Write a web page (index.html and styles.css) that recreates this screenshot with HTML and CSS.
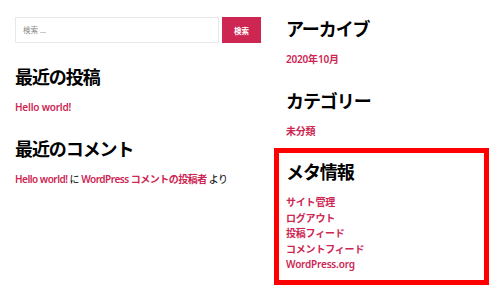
FILE: index.html
```html
<!DOCTYPE html>
<html lang="ja">
<head>
<meta charset="utf-8">
<title>Widgets</title>
<link rel="stylesheet" href="styles.css">
</head>
<body>
<div class="page">
  <div class="col">
    <form class="search">
      <input class="search-field" type="search" placeholder="検索 …">
      <button class="search-btn" type="button">検索</button>
    </form>
    <section class="widget">
      <h2 class="widget-title">最近の投稿</h2>
      <ul class="links"><li><a href="#">Hello world!</a></li></ul>
    </section>
    <section class="widget">
      <h2 class="widget-title">最近のコメント</h2>
      <ul class="links comments"><li><a href="#">Hello world!</a> に <a href="#">WordPress コメントの投稿者</a> より</li></ul>
    </section>
  </div>
  <div class="col right">
    <section class="widget first">
      <h2 class="widget-title">アーカイブ</h2>
      <ul class="links"><li><a href="#">2020年10月</a></li></ul>
    </section>
    <section class="widget">
      <h2 class="widget-title">カテゴリー</h2>
      <ul class="links"><li><a href="#">未分類</a></li></ul>
    </section>
    <section class="widget meta">
      <h2 class="widget-title">メタ情報</h2>
      <ul class="links">
        <li><a href="#">サイト管理</a></li>
        <li><a href="#">ログアウト</a></li>
        <li><a href="#">投稿フィード</a></li>
        <li><a href="#">コメントフィード</a></li>
        <li><a href="#">WordPress.org</a></li>
      </ul>
    </section>
  </div>
</div>
</body>
</html>
```
FILE: styles.css
```css
html, body {
  margin: 0;
  padding: 0;
  background: #fff;
}
body {
  font-family: "Noto Sans", "Noto Sans CJK JP", sans-serif;
  color: #000;
}
.page {
  display: grid;
  grid-template-columns: 246px 191px;
  column-gap: 25px;
  padding: 17px 0 0 15px;
}
.col {
  display: flex;
  flex-direction: column;
}
.right {
  padding-top: 2px;
}
.search {
  display: flex;
  gap: 3px;
  height: 26px;
  margin: 0 0 24px;
}
.search-field {
  flex: 1;
  box-sizing: border-box;
  height: 26px;
  margin: 0;
  border: 1px solid #e8e8e8;
  padding: 0 0 0 7px;
  font: 400 7.5px "Noto Sans", "Noto Sans CJK JP", sans-serif;
  color: #666;
  outline: none;
}
.search-field::placeholder {
  color: #888;
}
.search-btn {
  width: 39px;
  height: 26px;
  margin: 0;
  border: 0;
  padding: 0;
  background: #cd2653;
  color: #fff;
  font: 700 7.5px "Noto Sans", "Noto Sans CJK JP", sans-serif;
}
.widget {
  margin: 0 0 23px;
}
.widget-title {
  margin: 0 0 13px;
  font-size: 18px;
  line-height: 20px;
  font-weight: 700;
  letter-spacing: -0.06em;
}
.links {
  list-style: none;
  margin: 0;
  padding: 0;
  font-size: 10px;
  line-height: 15.5px;
  font-weight: 600;
  letter-spacing: -0.02em;
}
.links a {
  color: #cd2653;
  text-decoration: none;
}
.comments {
  font-weight: 400;
  letter-spacing: -0.05em;
}
.comments a {
  font-weight: 600;
}
.meta {
  margin: -14px 0 0 -12px;
  width: 215px;
  box-sizing: border-box;
  border: 5px solid #ff0000;
  padding: 9px 7px 7px 7px;
}
```
